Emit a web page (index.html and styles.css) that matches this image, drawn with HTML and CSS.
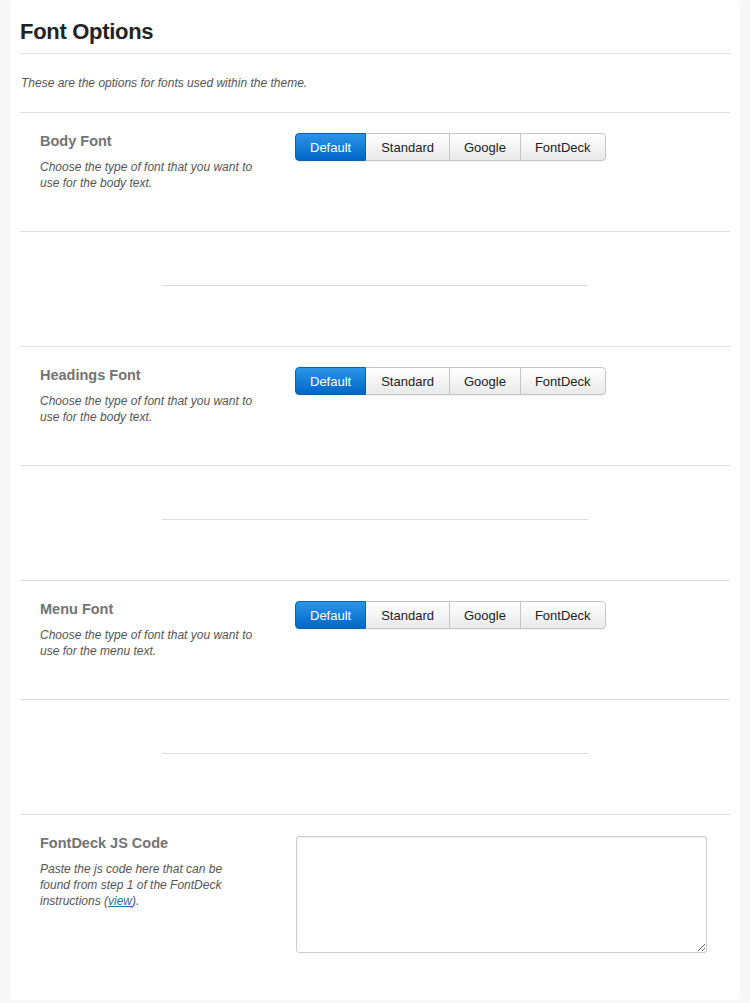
FILE: index.html
```html
<!DOCTYPE html>
<html lang="en">

<head>
    <meta charset="UTF-8">
    <title>Font Options</title>
    <link rel="stylesheet" href="styles.css">
</head>

<body>
    <div class="panel">
        <h2 class="title">Font Options</h2>
        <p class="intro">These are the options for fonts used within the theme.</p>

        <div class="option">
            <div class="option-label">
                <h4>Body Font</h4>
                <p>Choose the type of font that you want to use for the body text.</p>
            </div>
            <div class="option-control">
                <div class="btn-group">
                    <button class="btn active">Default</button>
                    <button class="btn">Standard</button>
                    <button class="btn">Google</button>
                    <button class="btn">FontDeck</button>
                </div>
            </div>
        </div>
        <div class="spacer"><hr></div>

        <div class="option">
            <div class="option-label">
                <h4>Headings Font</h4>
                <p>Choose the type of font that you want to use for the body text.</p>
            </div>
            <div class="option-control">
                <div class="btn-group">
                    <button class="btn active">Default</button>
                    <button class="btn">Standard</button>
                    <button class="btn">Google</button>
                    <button class="btn">FontDeck</button>
                </div>
            </div>
        </div>
        <div class="spacer"><hr></div>

        <div class="option">
            <div class="option-label">
                <h4>Menu Font</h4>
                <p>Choose the type of font that you want to use for the menu text.</p>
            </div>
            <div class="option-control">
                <div class="btn-group">
                    <button class="btn active">Default</button>
                    <button class="btn">Standard</button>
                    <button class="btn">Google</button>
                    <button class="btn">FontDeck</button>
                </div>
            </div>
        </div>
        <div class="spacer"><hr></div>

        <div class="option last">
            <div class="option-label">
                <h4>FontDeck JS Code</h4>
                <p>Paste the js code here that can be found from step 1 of the FontDeck instructions (<a href="#">view</a>).</p>
            </div>
            <div class="option-control">
                <textarea class="code"></textarea>
            </div>
        </div>
    </div>
</body>

</html>
```

FILE: styles.css
```css
* {
    margin: 0;
    padding: 0;
    box-sizing: border-box;
}

body {
    background: #f7f7f7;
    font-family: "Liberation Sans", Arial, Helvetica, sans-serif;
    color: #333;
}

.panel {
    width: 730px;
    margin: 0 10px;
    padding: 0 10px;
    background: #fff;
    border-radius: 4px;
}

.title {
    padding: 19px 0 8px;
    font-size: 22px;
    line-height: 26px;
    letter-spacing: -0.3px;
    color: #222;
    border-bottom: 1px solid #dfdfdf;
}

.intro {
    padding: 21px 1px 21px;
    font-size: 12px;
    line-height: 16px;
    font-style: italic;
    color: #555;
    border-bottom: 1px solid #dfdfdf;
}

.option {
    display: flex;
    padding: 20px 20px 40px;
    border-bottom: 1px solid #dfdfdf;
}

.option.last {
    border-bottom: none;
    padding-bottom: 47px;
}

.option-label {
    width: 214px;
    margin-right: 41px;
}

.option-label h4 {
    margin-top: -1px;
    margin-bottom: 9px;
    font-size: 14.5px;
    line-height: 18px;
    color: #737373;
}

.option-label p {
    font-size: 12px;
    line-height: 16px;
    font-style: italic;
    color: #555;
}

.option-label a {
    color: #21759b;
}

.option-control {
    flex: 1;
}

.btn-group {
    display: inline-flex;
    border-radius: 4px;
    box-shadow: 0 1px 1px rgba(0, 0, 0, 0.06);
}

.btn {
    height: 28px;
    padding: 0 14px;
    margin-left: -1px;
    font-family: "Liberation Sans", Arial, Helvetica, sans-serif;
    font-size: 13px;
    color: #222;
    background: linear-gradient(#ffffff, #e9e9e9);
    border: 1px solid #c6c6c6;
}

.btn:nth-child(2) {
    padding: 0 15px;
}

.btn:first-child {
    margin-left: 0;
    border-radius: 4px 0 0 4px;
}

.btn:last-child {
    border-radius: 0 4px 4px 0;
}

.btn.active {
    position: relative;
    color: #fff;
    background: linear-gradient(#2b95e8, #0066c6);
    border-color: #0a62b4;
}

.spacer {
    padding: 53px 0 60px;
    border-bottom: 1px solid #dfdfdf;
}

.spacer hr {
    width: 60%;
    height: 0;
    margin: 0 auto;
    border: 0;
    border-top: 1px solid #dcdcdc;
}

.code {
    display: block;
    width: 411px;
    height: 117px;
    margin-top: 1px;
    margin-left: 1px;
    border: 1px solid #cccccc;
    border-radius: 3px;
    box-shadow: inset 0 1px 2px rgba(0, 0, 0, 0.07);
    background: #fff;
}
```
